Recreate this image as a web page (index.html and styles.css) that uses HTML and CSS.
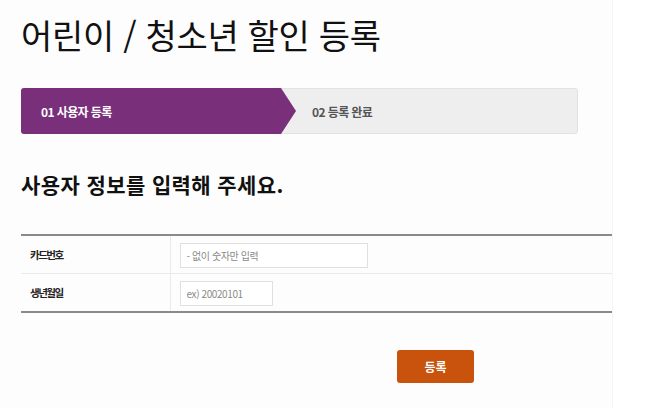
FILE: index.html
```html
<!DOCTYPE html>
<html lang="ko">
<head>
    <meta charset="UTF-8">
    <title>어린이 / 청소년 할인 등록</title>
    <link rel="stylesheet" href="styles.css">
</head>
<body>
    <div class="page">
        <h1 class="title">어린이 / 청소년 할인 등록</h1>

        <!-- 진행 단계 -->
        <div class="steps">
            <div class="step is-active">01 사용자 등록</div>
            <div class="step">02 등록 완료</div>
        </div>

        <h2 class="subtitle">사용자 정보를 입력해 주세요.</h2>

        <table class="form-table">
            <tr>
                <th>카드번호</th>
                <td><input type="text" class="field field-card" placeholder="- 없이 숫자만 입력"></td>
            </tr>
            <tr>
                <th>생년월일</th>
                <td><input type="text" class="field field-birth" placeholder="ex) 20020101"></td>
            </tr>
        </table>

        <div class="actions">
            <button type="button" class="btn-submit">등록</button>
        </div>
    </div>
</body>
</html>
```

FILE: styles.css
```css
body {
    margin: 0;
    background: #fff;
    font-family: "Noto Sans CJK KR", "Noto Sans", sans-serif;
    color: #111;
}

.page {
    width: 591px;
    min-height: 408px;
    padding-left: 21px;
    background: #fdfdfd;
    border-right: 1px solid #f6f6f6;
    box-sizing: content-box;
    overflow: hidden;
}

.title {
    margin: 0;
    padding-top: 11px;
    font-size: 34px;
    line-height: 48px;
    font-weight: 400;
    letter-spacing: -0.3px;
    color: #111;
}

/* Steps */
.steps {
    display: flex;
    width: 557px;
    height: 46px;
    margin-top: 29px;
    background: #eeeeee;
    border: 1px solid #e2e2e2;
    border-radius: 3px;
    box-sizing: border-box;
}

.step {
    display: flex;
    align-items: center;
    font-size: 12px;
    font-weight: 700;
    letter-spacing: -0.6px;
    color: #555;
    padding-left: 16px;
}

.step.is-active {
    width: 275px;
    padding-left: 20px;
    margin: -1px 0 -1px -1px;
    background: #7a2f7a;
    color: #fff;
    border-radius: 3px 0 0 3px;
    clip-path: polygon(0 0, 260px 0, 100% 50%, 260px 100%, 0 100%);
    box-sizing: border-box;
}

.subtitle {
    margin: 36px 0 0;
    font-size: 21px;
    line-height: 28px;
    font-weight: 700;
    letter-spacing: 0.4px;
    color: #111;
}

/* Form table */
.form-table {
    width: 591px;
    margin-top: 36px;
    border-collapse: collapse;
    border-top: 2px solid #8a8a8a;
    border-bottom: 2px solid #8a8a8a;
}

.form-table th,
.form-table td {
    height: 37px;
    padding: 0;
    border-bottom: 1px solid #eaeaea;
    vertical-align: middle;
}

.form-table th {
    width: 149px;
    padding-left: 9px;
    text-align: left;
    font-size: 10.5px;
    font-weight: 700;
    letter-spacing: -1.5px;
    color: #222;
    border-right: 1px solid #eaeaea;
    box-sizing: border-box;
}

.form-table td {
    padding-left: 9px;
}

.field {
    height: 25px;
    padding: 0 6px;
    border: 1px solid #e0e0e0;
    background: #fff;
    font-family: inherit;
    font-size: 10px;
    letter-spacing: -0.4px;
    box-sizing: border-box;
    outline: none;
}

.field::placeholder {
    color: #8a8a8a;
}

.field-card { width: 188px; }
.field-birth { width: 93px; }

.actions {
    display: flex;
    padding-left: 376px;
    margin-top: 37px;
}

.btn-submit {
    width: 77px;
    height: 33px;
    border: 0;
    border-radius: 3px;
    background: #c9530c;
    color: #fff;
    font-family: inherit;
    font-size: 12px;
    font-weight: 700;
}
```
